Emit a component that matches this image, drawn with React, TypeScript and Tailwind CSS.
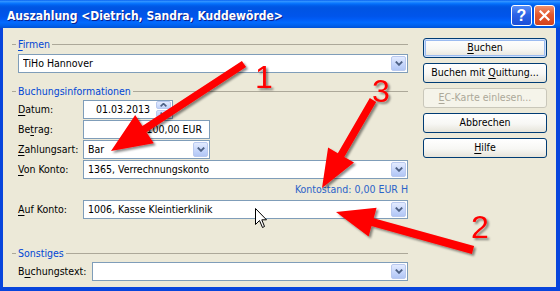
import React from 'react';

// underline one accelerator letter, like the Windows dialog does
const Acc = ({ t, i }: { t: string; i: number }) => (
  <span className="whitespace-pre">
    {t.slice(0, i)}
    <span className="underline underline-offset-[2px]">{t[i]}</span>
    {t.slice(i + 1)}
  </span>
);

const DropBtn = () => (
  <div className="flex h-[15px] w-[15px] shrink-0 items-center justify-center rounded-[2px] border border-[#b9c9ef] bg-[linear-gradient(180deg,#e3ebfe_0%,#c6d6fb_55%,#b1c6f5_100%)]">
    <svg width="8" height="5" viewBox="0 0 8 5">
      <path d="M0.8 0.6 L4 3.8 L7.2 0.6" fill="none" stroke="#4d6185" strokeWidth="1.9" />
    </svg>
  </div>
);

const Combo = ({ text, className = '' }: { text: string; className?: string }) => (
  <div className={`flex h-[19px] items-center border border-[#7f9db9] bg-white pl-[4px] pr-px ${className}`}>
    <span className="flex-1 truncate">{text}</span>
    <DropBtn />
  </div>
);

const GroupHead = ({ children }: { children: React.ReactNode }) => (
  <div className="flex h-[13px] items-center">
    <div className="h-px w-[4px] bg-[#aca899]" />
    <span className="px-[2px] text-[#0046d5]">{children}</span>
    <div className="h-px flex-1 bg-[#aca899]" />
  </div>
);

const Row = ({ label, children }: { label: React.ReactNode; children: React.ReactNode }) => (
  <div className="flex h-[19px] items-center">
    <span className="w-[65px] shrink-0">{label}</span>
    {children}
  </div>
);

const XPButton = ({
  children,
  primary,
  disabled,
}: {
  children: React.ReactNode;
  primary?: boolean;
  disabled?: boolean;
}) => {
  if (disabled)
    return (
      <div className="flex h-[20px] items-center justify-center rounded-[3px] border border-[#c9c7ba] bg-[#f5f4ea] text-[#aca899]">
        {children}
      </div>
    );
  return (
    <div
      className={`flex h-[20px] items-center justify-center rounded-[3px] border border-[#003c74] bg-[linear-gradient(180deg,#ffffff_0%,#f7f7f4_55%,#e6e4da_100%)] ${
        primary ? 'shadow-[inset_0_0_0_1px_#cfe1fc,inset_0_0_0_2px_#9bbbf0]' : ''
      }`}
    >
      {children}
    </div>
  );
};

function arrowPts(x1: number, y1: number, x2: number, y2: number, sw: number, hl: number, hw: number) {
  const dx = x2 - x1;
  const dy = y2 - y1;
  const len = Math.hypot(dx, dy);
  const ux = dx / len;
  const uy = dy / len;
  const nx = -uy;
  const ny = ux;
  const bx = x2 - ux * hl;
  const by = y2 - uy * hl;
  const p = [
    [x1 + (nx * sw) / 2, y1 + (ny * sw) / 2],
    [bx + (nx * sw) / 2, by + (ny * sw) / 2],
    [bx + nx * hw, by + ny * hw],
    [x2, y2],
    [bx - nx * hw, by - ny * hw],
    [bx - (nx * sw) / 2, by - (ny * sw) / 2],
    [x1 - (nx * sw) / 2, y1 - (ny * sw) / 2],
  ];
  return p.map((q) => q.map((v) => v.toFixed(1)).join(',')).join(' ');
}

export default function App() {
  return (
    <div className="relative flex h-[291px] w-[560px] flex-col overflow-hidden bg-[#0845dc] font-['DejaVu_Sans_Condensed','DejaVu_Sans',sans-serif] text-[10.5px] text-black">
      {/* title bar */}
      <div className="flex h-[28px] shrink-0 items-center bg-[linear-gradient(180deg,#0058ee_0%,#3593ff_4%,#288eff_7%,#127dff_10%,#036ffc_14%,#0262ee_18%,#0057e5_24%,#0054e3_30%,#0055eb_58%,#005bf5_68%,#026afe_80%,#0062ef_90%,#0052d6_100%)] pt-[3px] pr-[5px] pl-[7px]">
        <span className="flex-1 text-[12px] font-bold text-white [text-shadow:1px_1px_0_#0a1e8c]">
          {'Auszahlung <Dietrich, Sandra, Kuddewörde>'}
        </span>
        <div className="flex gap-[2px]">
          <div className="flex h-[21px] w-[21px] items-center justify-center rounded-[3px] border border-white bg-[linear-gradient(180deg,#5a8ff7_0%,#2b63e6_45%,#1c4fd8_100%)] font-['Liberation_Sans',sans-serif] text-[16px] font-bold leading-none text-white">
            ?
          </div>
          <div className="flex h-[21px] w-[21px] items-center justify-center rounded-[3px] border border-white bg-[linear-gradient(180deg,#f0916c_0%,#e3592f_45%,#d2431d_100%)]">
            <svg width="11" height="11" viewBox="0 0 11 11">
              <path d="M1.5 1.5 L9.5 9.5 M9.5 1.5 L1.5 9.5" stroke="#fff" strokeWidth="2.2" strokeLinecap="square" />
            </svg>
          </div>
        </div>
      </div>

      {/* body */}
      <div className="flex flex-1 border-r-4 border-b-4 border-l-[3px] border-[#0845dc] bg-[#ece9d8] pl-[9px]">
        <div className="flex w-[396px] flex-col pt-[10px]">
          <GroupHead>
            <Acc t="Firmen" i={0} />
          </GroupHead>
          <div className="mt-[3px] pl-[6px]">
            <Combo text="TiHo Hannover" />
          </div>

          <div className="mt-[12px]">
            <GroupHead>Buchungsinformationen</GroupHead>
          </div>
          <div className="mt-[2px] flex flex-col gap-px pl-[6px]">
            <Row label={<Acc t="Datum:" i={0} />}>
              <div className="flex h-[19px] w-[90px] items-center border border-[#7f9db9] bg-white pr-px">
                <span className="flex-1 pr-[6px] text-right">01.03.2013</span>
                <div className="flex h-[17px] w-[15px] flex-col gap-px">
                  <div className="flex flex-1 items-center justify-center rounded-[2px] border border-[#b9c9ef] bg-[linear-gradient(180deg,#e3ebfe,#c0d2fa)]">
                    <svg width="7" height="4" viewBox="0 0 7 4">
                      <path d="M0.6 3.4 L3.5 0.6 L6.4 3.4" fill="none" stroke="#4d6185" strokeWidth="1.6" />
                    </svg>
                  </div>
                  <div className="flex flex-1 items-center justify-center rounded-[2px] border border-[#b9c9ef] bg-[linear-gradient(180deg,#d6e2fd,#b6c9f6)]">
                    <svg width="7" height="4" viewBox="0 0 7 4">
                      <path d="M0.6 0.6 L3.5 3.4 L6.4 0.6" fill="none" stroke="#4d6185" strokeWidth="1.6" />
                    </svg>
                  </div>
                </div>
              </div>
            </Row>
            <Row label={<Acc t="Betrag:" i={2} />}>
              <div className="flex h-[19px] w-[127px] items-center justify-end border border-[#7f9db9] bg-white pr-[7px]">
                100,00 EUR
              </div>
            </Row>
            <Row label={<Acc t="Zahlungsart:" i={0} />}>
              <Combo text="Bar" className="w-[127px]" />
            </Row>
            <Row label={<Acc t="Von Konto:" i={0} />}>
              <Combo text="1365, Verrechnungskonto" className="flex-1" />
            </Row>
            <div className="flex h-[19px] items-center justify-end text-[#2a63c8]">Kontostand: 0,00 EUR H</div>
            <Row label={<Acc t="Auf Konto:" i={0} />}>
              <Combo text="1006, Kasse Kleintierklinik" className="flex-1" />
            </Row>
          </div>

          <div className="mt-[28px]">
            <GroupHead>Sonstiges</GroupHead>
          </div>
          <div className="mt-[2px] flex h-[19px] items-center pl-[6px]">
            <span className="w-[74px] shrink-0">
              <Acc t="Buchungstext:" i={1} />
            </span>
            <Combo text="" className="flex-1" />
          </div>
        </div>

        <div className="ml-[15px] flex w-[124px] flex-col gap-[5px] pt-[10px]">
          <XPButton primary>
            <Acc t="Buchen" i={0} />
          </XPButton>
          <XPButton>
            <Acc t="Buchen mit Quittung..." i={11} />
          </XPButton>
          <XPButton disabled>
            <Acc t="EC-Karte einlesen..." i={0} />
          </XPButton>
          <XPButton>Abbrechen</XPButton>
          <XPButton>
            <Acc t="Hilfe" i={0} />
          </XPButton>
        </div>
      </div>

      {/* mouse pointer */}
      <svg className="pointer-events-none absolute top-[208px] left-[255px]" width="13" height="21" viewBox="0 0 13 21">
        <path d="M0.5 0.5 L0.5 16.5 L4.5 12.5 L7.5 19.5 L9.5 18.5 L6.8 11.8 L11.5 11.8 Z" fill="#fff" stroke="#000" strokeWidth="1" />
      </svg>

      {/* red annotation arrows */}
      <svg className="pointer-events-none absolute inset-0" width="560" height="291" viewBox="0 0 560 291">
        <defs>
          <filter id="sh" x="-20%" y="-20%" width="140%" height="140%">
            <feDropShadow dx="2" dy="2" stdDeviation="1.2" floodColor="#000" floodOpacity="0.45" />
          </filter>
        </defs>
        <g fill="#ff0000" filter="url(#sh)">
          <polygon points={arrowPts(244, 64, 111, 151, 7.5, 40, 17)} />
          <polygon points={arrowPts(373, 100, 322, 188, 7.5, 38, 15)} />
          <polygon points={arrowPts(473, 250, 336, 212, 8, 38, 15)} />
          <text x="255" y="88" fontFamily="Liberation Sans, Arial, sans-serif" fontSize="32">
            1
          </text>
          <text x="372" y="102" fontFamily="Liberation Sans, Arial, sans-serif" fontSize="32">
            3
          </text>
          <text x="471" y="238" fontFamily="Liberation Sans, Arial, sans-serif" fontSize="32">
            2
          </text>
        </g>
      </svg>
    </div>
  );
}
